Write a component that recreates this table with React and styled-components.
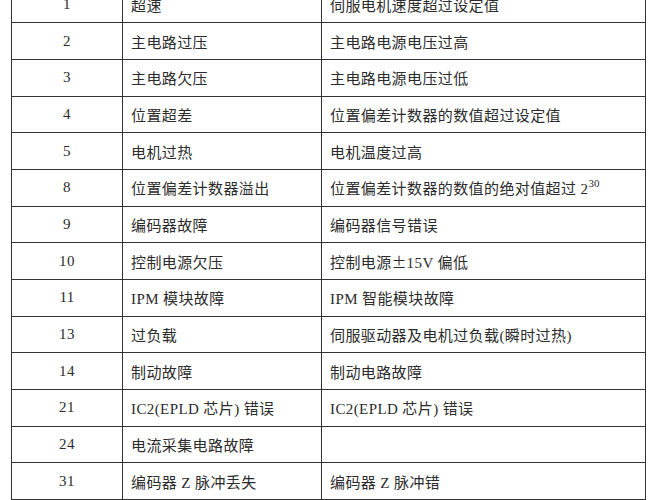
import styled, { createGlobalStyle } from "styled-components";

const GlobalStyle = createGlobalStyle`
  html, body {
    margin: 0;
    padding: 0;
    background: #ffffff;
    overflow: hidden;
  }
  body {
    font-family: "Liberation Serif", "Noto Sans CJK SC", serif;
  }
`;

const Page = styled.div`
  width: 665px;
  height: 500px;
  overflow: hidden;
  background: #ffffff;
`;

const Table = styled.div`
  display: grid;
  grid-template-columns: 111px 199px 324px;
  grid-auto-rows: 36.67px;
  margin: -13.33px 0 0 11px;
  border-left: 1px solid #333;
  width: 635px;
`;

const Cell = styled.div`
  box-sizing: border-box;
  display: flex;
  align-items: center;
  justify-content: ${(p) => (p.$center ? "center" : "flex-start")};
  padding-left: ${(p) => (p.$center ? "0" : "8px")};
  border-right: 1px solid #333;
  border-bottom: 1px solid #333;
  font-size: 15px;
  letter-spacing: 0.4px;
  color: #2c2c2c;
  white-space: nowrap;
`;

const Sup = styled.sup`
  font-size: 11px;
  line-height: 0;
  position: relative;
  top: -5px;
  letter-spacing: 0;
`;

const Wide = styled.span`
  font-family: "Noto Sans CJK SC", sans-serif;
  display: inline-block;
  width: 15px;
  text-align: center;
`;

const rows = [
  ["1", "超速", "伺服电机速度超过设定值"],
  ["2", "主电路过压", "主电路电源电压过高"],
  ["3", "主电路欠压", "主电路电源电压过低"],
  ["4", "位置超差", "位置偏差计数器的数值超过设定值"],
  ["5", "电机过热", "电机温度过高"],
  ["8", "位置偏差计数器溢出", <>位置偏差计数器的数值的绝对值超过 2<Sup>30</Sup></>],
  ["9", "编码器故障", "编码器信号错误"],
  ["10", "控制电源欠压", <>控制电源<Wide>±</Wide>15V 偏低</>],
  ["11", "IPM 模块故障", "IPM 智能模块故障"],
  ["13", "过负载", "伺服驱动器及电机过负载(瞬时过热)"],
  ["14", "制动故障", "制动电路故障"],
  ["21", "IC2(EPLD 芯片)  错误", "IC2(EPLD 芯片)  错误"],
  ["24", "电流采集电路故障", ""],
  ["31", "编码器 Z 脉冲丢失", "编码器 Z 脉冲错"],
];

export default function App() {
  return (
    <Page>
      <GlobalStyle />
      <Table>
        {rows.map(([code, name, desc]) => (
          <>
            <Cell key={code + "a"} $center>{code}</Cell>
            <Cell key={code + "b"}>{name}</Cell>
            <Cell key={code + "c"}>{desc}</Cell>
          </>
        ))}
      </Table>
    </Page>
  );
}
